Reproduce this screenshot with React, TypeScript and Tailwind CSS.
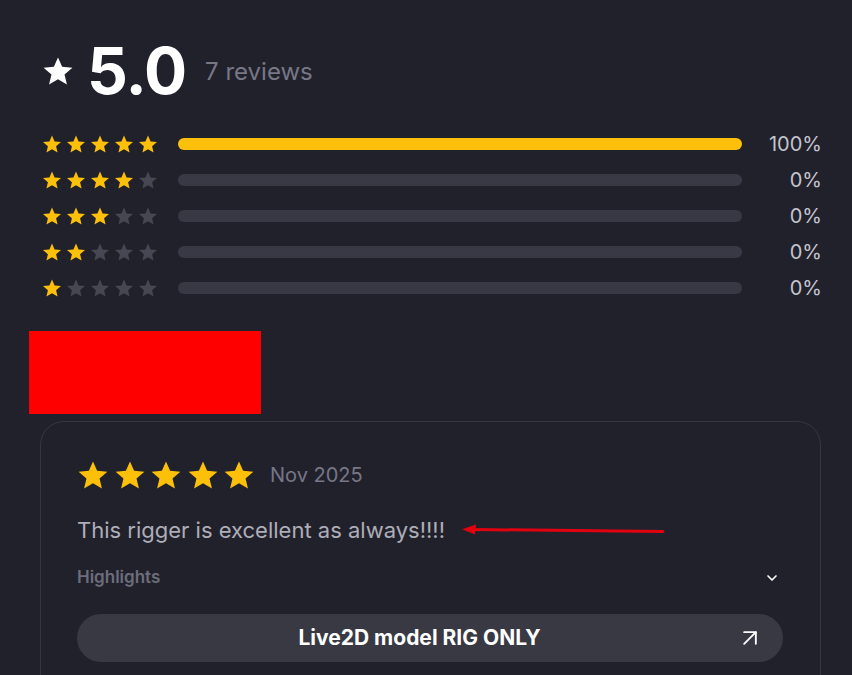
import { ChevronDown, ArrowUpRight } from 'lucide-react';

const Star = ({ className }: { className: string }) => (
  <svg viewBox="0 0 24 24" className={className} fill="currentColor">
    <path d="M12 1.8l3.1 7.1 7.7.6-5.9 5.1 1.8 7.6L12 18.2l-6.7 4 1.8-7.6L1.2 9.5l7.7-.6z" />
  </svg>
);

const rows = [
  { stars: 5, pct: 100 },
  { stars: 4, pct: 0 },
  { stars: 3, pct: 0 },
  { stars: 2, pct: 0 },
  { stars: 1, pct: 0 },
];

const App = () => {
  return (
    <div className="w-[852px] h-[675px] overflow-hidden bg-[#21212c] font-['Inter','Liberation_Sans',sans-serif]">
      {/* summary */}
      <div className="pt-[31px] pl-[42px] pr-[32px]">
        <div className="flex items-center h-[80px]">
          <Star className="w-[32px] h-[32px] text-white" />
          <span className="ml-[13px] text-[64px] leading-none font-bold text-white tracking-[-1px]">5.0</span>
          <span className="ml-[19px] text-[24px] text-[#777786] mt-[2px]">7 reviews</span>
        </div>
        <div className="mt-[15px] flex flex-col">
          {rows.map((r) => (
            <div key={r.stars} className="flex items-center h-[36px]">
              <div className="flex gap-1 w-[116px]">
                {[1, 2, 3, 4, 5].map((i) => (
                  <Star key={i} className={i <= r.stars ? 'w-5 h-5 text-[#fcbf0a]' : 'w-5 h-5 text-[#474754]'} />
                ))}
              </div>
              <div className="ml-[20px] w-[564px] h-[12px] rounded-full bg-[#393946]">
                {r.pct > 0 && <div className="h-full rounded-full bg-[#fcbf0a]" style={{ width: `${r.pct}%` }} />}
              </div>
              <div className="flex-1 text-right text-[20px] text-[#c4c4cc] mr-[-2px]">{r.pct}%</div>
            </div>
          ))}
        </div>
      </div>

      {/* redacted block */}
      <div className="ml-[29px] mt-[25px] w-[232px] h-[83px] bg-[#ff0000]" />

      {/* review card */}
      <div className="relative ml-[40px] mt-[7px] w-[781px] h-[300px] border border-[#363642] rounded-[24px] pt-[37px] pl-[36px] pr-[37px]">
        <div className="flex items-center h-[32px]">
          <div className="flex gap-[4.5px]">
            {[1, 2, 3, 4, 5].map((i) => (
              <Star key={i} className="w-8 h-8 text-[#fcbf0a]" />
            ))}
          </div>
          <span className="ml-[15px] text-[20px] text-[#777786]">Nov 2025</span>
        </div>
        <p className="mt-[24px] text-[22px] leading-[30px] text-[#aeaeb8]">This rigger is excellent as always!!!!</p>
        <div className="mt-[20px] flex items-center justify-between h-[26px]">
          <span className="text-[17px] font-semibold text-[#6d6d7b]">Highlights</span>
          <ChevronDown className="w-4 h-4 text-white mr-[3px]" strokeWidth={2.5} />
        </div>
        <button className="mt-[23px] w-full h-[48px] rounded-full bg-[#393944] flex items-center justify-center gap-[8px]">
          <span className="flex-1 text-center pl-[34px] text-[21px] font-bold text-white">Live2D model RIG ONLY</span>
          <ArrowUpRight className="mr-[19px] w-[28px] h-[28px] text-white" strokeWidth={1.6} />
        </button>

        {/* annotation arrow */}
        <svg className="absolute left-[418px] top-[96px]" width="210" height="24" viewBox="0 0 210 24">
          <line x1="14" y1="11.5" x2="204" y2="13.5" stroke="#e3000f" strokeWidth="3" strokeLinecap="round" />
          <path d="M3 11.3 L17 6.5 L16 16.5 Z" fill="#e3000f" />
        </svg>
      </div>
    </div>
  );
};

export default App;
